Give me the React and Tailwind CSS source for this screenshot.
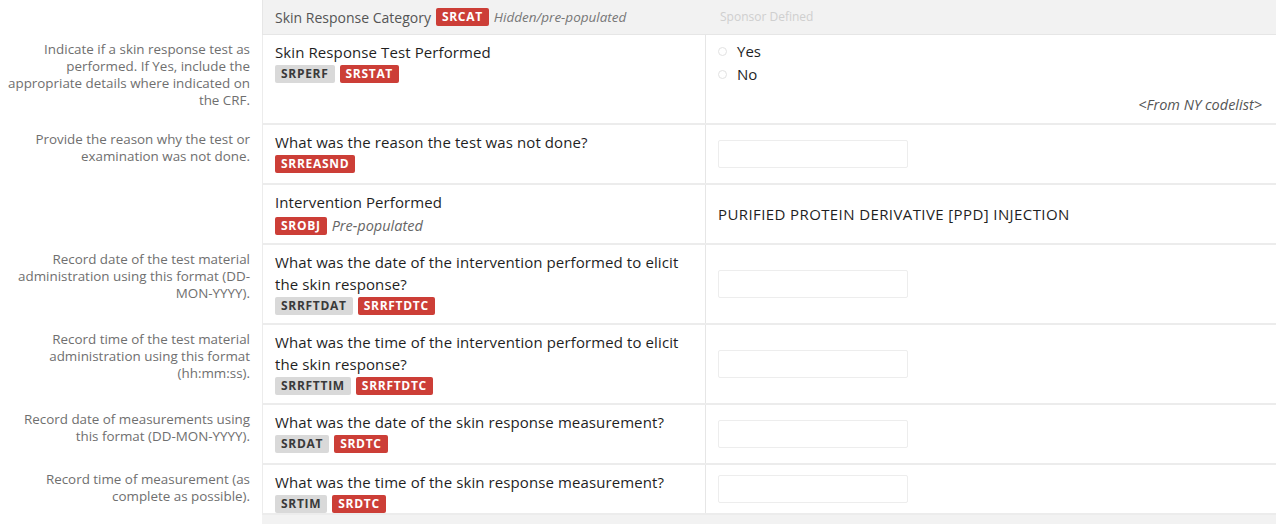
import React from "react";

const Red = ({ children }) => (
  <span className="inline-flex h-[18px] items-center rounded-[2px] bg-[#cc3e37] px-[6px] text-[12px] font-bold leading-none tracking-[0.7px] text-white">
    {children}
  </span>
);
const Gray = ({ children }) => (
  <span className="inline-flex h-[18px] items-center rounded-[2px] bg-[#d9d9d9] px-[6px] text-[12px] font-bold leading-none tracking-[0.7px] text-[#3a3a3a]">
    {children}
  </span>
);

const Input = () => (
  <div className="h-[28px] w-[190px] rounded-[2px] border border-[#ededed] bg-white" />
);

function Row({ help, h, left, right, rightClass = "items-center" }) {
  return (
    <div className="flex" style={{ height: h }}>
      <div className="w-[262px] shrink-0 pr-3 pt-[6px] text-right text-[13.4px] leading-[17px] text-[#6f6f6f]">
        {help}
      </div>
      <div className="grid flex-1 grid-cols-[443px_1fr] border-b-2 border-l border-[#ececec] bg-white">
        <div className="border-r border-[#e6e6e6] pl-3 pt-[6px]">{left}</div>
        <div className={`flex pl-[12px] pr-[14px] ${rightClass}`}>{right}</div>
      </div>
    </div>
  );
}

const Q = ({ children }) => (
  <div className="text-[15px] leading-[22px] tracking-[0.1px] text-[#1f1f1f]">{children}</div>
);

export default function App() {
  return (
    <div
      className="h-[524px] w-[1276px] overflow-hidden bg-white"
      style={{ fontFamily: "'Open Sans', 'Liberation Sans', sans-serif" }}
    >
      {/* header */}
      <div className="flex h-[35px]">
        <div className="w-[262px] shrink-0" />
        <div className="grid flex-1 grid-cols-[443px_1fr] border-b border-l border-[#e6e6e6] bg-[#f2f2f2]">
          <div className="flex items-center gap-[5px] pl-3">
            <span className="text-[14px] text-[#555]">Skin Response Category</span>
            <Red>SRCAT</Red>
            <span className="text-[13.5px] italic text-[#777]">Hidden/pre-populated</span>
          </div>
          <div className="flex items-center pl-[14px] text-[12px] text-[#cfcfcf]">
            Sponsor Defined
          </div>
        </div>
      </div>

      <Row
        h={90}
        help={
          <>
            Indicate if a skin response test as performed. If Yes, include the appropriate details
            where indicated on the CRF.
          </>
        }
        left={
          <>
            <Q>Skin Response Test Performed</Q>
            <div className="mt-[2px] flex gap-[5px]">
              <Gray>SRPERF</Gray>
              <Red>SRSTAT</Red>
            </div>
          </>
        }
        rightClass="flex-col items-stretch pt-[5px]"
        right={
          <>
            <div className="flex items-center gap-[10px] text-[15px] leading-[23px] text-[#1f1f1f]">
              <span className="h-[9px] w-[9px] rounded-full border border-[#e2e2e2]" />
              Yes
            </div>
            <div className="flex items-center gap-[10px] text-[15px] leading-[23px] text-[#1f1f1f]">
              <span className="h-[9px] w-[9px] rounded-full border border-[#e2e2e2]" />
              No
            </div>
            <div className="mt-[8px] text-right text-[14.5px] italic text-[#555]">
              &lt;From NY codelist&gt;
            </div>
          </>
        }
      />

      <Row
        h={60}
        help={<>Provide the reason why the test or examination was not done.</>}
        left={
          <>
            <Q>What was the reason the test was not done?</Q>
            <div className="mt-[2px] flex gap-[5px]">
              <Red>SRREASND</Red>
            </div>
          </>
        }
        right={<Input />}
      />

      <Row
        h={60}
        help={null}
        left={
          <>
            <Q>Intervention Performed</Q>
            <div className="mt-[2px] flex items-center gap-[5px]">
              <Red>SROBJ</Red>
              <span className="text-[14.5px] italic text-[#666]">Pre-populated</span>
            </div>
          </>
        }
        right={
          <span className="text-[15px] tracking-[0.4px] text-[#1f1f1f]">
            PURIFIED PROTEIN DERIVATIVE [PPD] INJECTION
          </span>
        }
      />

      <Row
        h={80}
        help={<>Record date of the test material administration using this format (DD-MON-YYYY).</>}
        left={
          <>
            <Q>
              What was the date of the intervention performed to elicit
              <br />
              the skin response?
            </Q>
            <div className="mt-[2px] flex gap-[5px]">
              <Gray>SRRFTDAT</Gray>
              <Red>SRRFTDTC</Red>
            </div>
          </>
        }
        right={<Input />}
      />

      <Row
        h={80}
        help={<>Record time of the test material administration using this format (hh:mm:ss).</>}
        left={
          <>
            <Q>
              What was the time of the intervention performed to elicit
              <br />
              the skin response?
            </Q>
            <div className="mt-[2px] flex gap-[5px]">
              <Gray>SRRFTTIM</Gray>
              <Red>SRRFTDTC</Red>
            </div>
          </>
        }
        right={<Input />}
      />

      <Row
        h={60}
        help={<>Record date of measurements using this format (DD-MON-YYYY).</>}
        left={
          <>
            <Q>What was the date of the skin response measurement?</Q>
            <div className="mt-[2px] flex gap-[5px]">
              <Gray>SRDAT</Gray>
              <Red>SRDTC</Red>
            </div>
          </>
        }
        right={<Input />}
      />

      <Row
        h={50}
        help={<>Record time of measurement (as complete as possible).</>}
        left={
          <>
            <Q>What was the time of the skin response measurement?</Q>
            <div className="mt-[2px] flex gap-[5px]">
              <Gray>SRTIM</Gray>
              <Red>SRDTC</Red>
            </div>
          </>
        }
        right={<Input />}
      />
      <div className="flex h-[9px]">
        <div className="w-[262px] shrink-0" />
        <div className="flex-1 bg-[#f2f2f2]" />
      </div>
    </div>
  );
}
